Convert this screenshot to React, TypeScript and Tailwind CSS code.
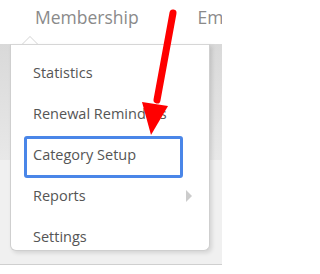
import { ReactNode } from 'react';

const items = ['Statistics', 'Renewal Reminders', 'Category Setup', 'Reports', 'Settings'];

const MenuItem = ({ label, children }: { label: string; children?: ReactNode }) => (
    <li className="h-[41px] flex items-center justify-between pl-[22px] pr-[17px] text-[14.5px] text-[#555]">
        <span>{label}</span>
        {children}
    </li>
);

export default function App() {
    return (
        <div
            className="relative w-[222px] h-[274px] overflow-hidden bg-white"
            style={{ fontFamily: '"Open Sans", "Noto Sans", sans-serif' }}
        >
            {/* Top nav */}
            <div className="h-[44px] flex items-start pt-[4px] text-[17.5px] text-[#8a8a8a]">
                <span className="ml-[35px]">Membership</span>
                <span className="ml-auto -mr-[20px]">Email</span>
            </div>

            {/* Page behind */}
            <div className="h-[116px] bg-gradient-to-b from-[#d9d9d9] to-[#e8e8e8]" />
            <div className="h-[105px] bg-[#f0f0f0] border-b border-[#cfcfcf]" />

            {/* Caret */}
            <div className="absolute left-[22px] top-[36px] w-0 h-0 border-x-[8px] border-x-transparent border-b-[8px] border-b-[#d4d4d4]" />
            <div className="absolute left-[23px] top-[37px] w-0 h-0 border-x-[7px] border-x-transparent border-b-[7px] border-b-white" />

            {/* Dropdown */}
            <div className="absolute left-[10px] top-[44px] w-[200px] h-[207px] bg-white border border-[#cfcfcf] border-t-[#d6d6d6] rounded-b-[6px] shadow-[2px_2px_4px_rgba(0,0,0,0.12)]">
                <ul className="pt-[7px]">
                    {items.map((label) => (
                        <MenuItem key={label} label={label}>
                            {label === 'Reports' && (
                                <span className="w-0 h-0 border-y-[6px] border-y-transparent border-l-[6px] border-l-[#cccccc]" />
                            )}
                        </MenuItem>
                    ))}
                </ul>
                {/* highlight box */}
                <div className="absolute left-[13px] top-[91px] w-[159px] h-[42px] border-[3px] border-[#4a86e8] rounded-[3px]" />
            </div>

            {/* Red arrow */}
            <svg className="absolute inset-0" width="222" height="274" viewBox="0 0 222 274">
                <line x1="173" y1="13" x2="157" y2="100" stroke="#ff0000" strokeWidth="7" strokeLinecap="round" />
                <polygon points="142,102 168,106 151,135" fill="#ff0000" />
            </svg>
        </div>
    );
}
